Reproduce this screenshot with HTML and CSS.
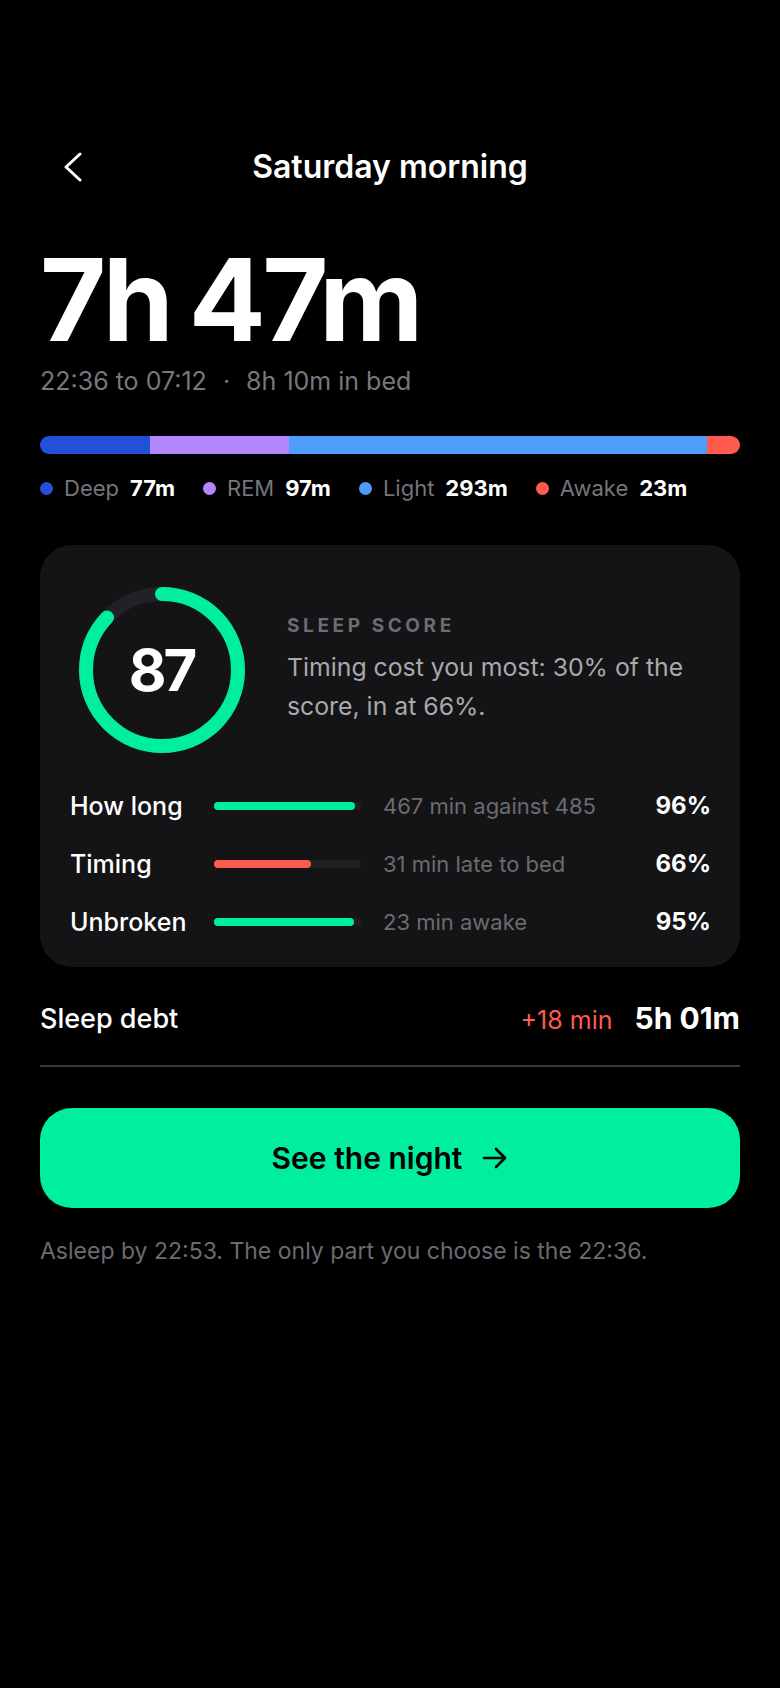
FILE: index.html
```html
<!DOCTYPE html>
<html lang="en">
<head>
  <meta charset="UTF-8">
  <title>Saturday morning</title>
  <link rel="stylesheet" href="styles.css">
</head>
<body>

  <div class="screen">

    <header class="top-bar">
      <button class="back" aria-label="Back">
        <svg width="18" height="30" viewBox="0 0 18 30">
          <path d="M16 2 L2 15 L16 28" fill="none" stroke="#fff" stroke-width="3" stroke-linecap="round" stroke-linejoin="round"/>
        </svg>
      </button>
      <h1>Saturday morning</h1>
      <span></span>
    </header>

    <div class="total">7h 47m</div>
    <div class="span-line">22:36 to 07:12 <span class="sep">·</span> 8h 10m in bed</div>

    <div class="stages">
      <div class="stage deep" style="flex: 77"></div>
      <div class="stage rem" style="flex: 97"></div>
      <div class="stage light" style="flex: 293"></div>
      <div class="stage awake" style="flex: 23"></div>
    </div>

    <div class="legend">
      <div class="legend-item"><i class="dot deep"></i><span class="name">Deep</span><b>77m</b></div>
      <div class="legend-item"><i class="dot rem"></i><span class="name">REM</span><b>97m</b></div>
      <div class="legend-item"><i class="dot light"></i><span class="name">Light</span><b>293m</b></div>
      <div class="legend-item"><i class="dot awake"></i><span class="name">Awake</span><b>23m</b></div>
    </div>

    <section class="card">
      <div class="score-head">
        <div class="ring">
          <svg width="166" height="166" viewBox="0 0 166 166">
            <circle cx="83" cy="83" r="76" fill="none" stroke="#222226" stroke-width="14"/>
            <circle cx="83" cy="83" r="76" fill="none" stroke="#00eea0" stroke-width="14"
              stroke-linecap="round" stroke-dasharray="415.4 477.5" transform="rotate(-90 83 83)"/>
          </svg>
          <div class="ring-value">87</div>
        </div>
        <div class="score-text">
          <div class="score-label">SLEEP SCORE</div>
          <p>Timing cost you most: 30% of the score, in at 66%.</p>
        </div>
      </div>

      <div class="factors">
        <div class="factor">
          <span class="f-name">How long</span>
          <div class="track"><div class="fill good" style="width: 96%"></div></div>
          <span class="f-detail">467 min against 485</span>
          <span class="f-pct">96%</span>
        </div>
        <div class="factor">
          <span class="f-name">Timing</span>
          <div class="track"><div class="fill bad" style="width: 66%"></div></div>
          <span class="f-detail">31 min late to bed</span>
          <span class="f-pct">66%</span>
        </div>
        <div class="factor">
          <span class="f-name">Unbroken</span>
          <div class="track"><div class="fill good" style="width: 95%"></div></div>
          <span class="f-detail">23 min awake</span>
          <span class="f-pct">95%</span>
        </div>
      </div>
    </section>

    <div class="debt">
      <span class="debt-name">Sleep debt</span>
      <div class="debt-values">
        <span class="debt-change">+18 min</span>
        <span class="debt-total">5h 01m</span>
      </div>
    </div>

    <button class="cta">
      See the night
      <svg width="26" height="22" viewBox="0 0 26 22">
        <path d="M2 11 H23 M14 2 L23 11 L14 20" fill="none" stroke="#000" stroke-width="2.6" stroke-linecap="round" stroke-linejoin="round"/>
      </svg>
    </button>

    <p class="note">Asleep by 22:53. The only part you choose is the 22:36.</p>

  </div>

</body>
</html>
```

FILE: styles.css
```css
body {
  margin: 0;
  background: #000;
  color: #fff;
  font-family: Inter, "Noto Sans", sans-serif;
}
.screen {
  width: 780px;
  min-height: 1688px;
  box-sizing: border-box;
  padding: 143px 40px 0;
}
.top-bar {
  display: grid;
  grid-template-columns: 1fr auto 1fr;
  align-items: center;
  height: 48px;
}
.top-bar h1 {
  margin: 0;
  font-size: 32px;
  font-weight: 600;
  line-height: 48px;
}
.back {
  background: none;
  border: none;
  padding: 0 0 0 24px;
  width: 60px;
  height: 48px;
  display: flex;
  align-items: center;
  cursor: pointer;
}
.total {
  margin-top: 52px;
  font-size: 114px;
  font-weight: 700;
  line-height: 114px;
  letter-spacing: -3.5px;
  word-spacing: -5px;
}
.span-line {
  margin-top: 8px;
  font-size: 25px;
  line-height: 32px;
  color: #77777c;
}
.sep {
  margin: 0 9px;
}
.stages {
  display: flex;
  height: 18px;
  margin-top: 39px;
  border-radius: 9px;
  overflow: hidden;
}
.deep { background: #2250d8; }
.rem { background: #b287fd; }
.light { background: #4d9dfd; }
.awake { background: #ff5b4d; }
.legend {
  display: flex;
  gap: 28px;
  margin-top: 20px;
  font-size: 22px;
  line-height: 28px;
}
.legend-item {
  display: flex;
  align-items: center;
}
.dot {
  width: 13px;
  height: 13px;
  border-radius: 50%;
  margin-right: 11px;
}
.name {
  color: #75757a;
  margin-right: 11px;
}
.legend b {
  font-weight: 700;
}
.card {
  margin-top: 43px;
  background: #141416;
  border-radius: 32px;
  padding: 42px 29px 29px 30px;
}
.score-head {
  display: flex;
  align-items: center;
}
.ring {
  position: relative;
  width: 166px;
  height: 166px;
  margin-left: 9px;
  flex-shrink: 0;
}
.ring svg {
  display: block;
}
.ring-value {
  position: absolute;
  inset: 0;
  display: flex;
  align-items: center;
  justify-content: center;
  font-size: 58px;
  font-weight: 700;
  letter-spacing: -3px;
  padding-right: 1px;
}
.score-text {
  margin-left: 42px;
}
.score-label {
  font-size: 19px;
  font-weight: 700;
  line-height: 24px;
  letter-spacing: 3.6px;
  color: #6c6c72;
}
.score-text p {
  margin: 10px 0 0;
  font-size: 24.8px;
  line-height: 39px;
  color: #a8a8ad;
}
.factors {
  margin-top: 37px;
  display: flex;
  flex-direction: column;
  gap: 26px;
}
.factor {
  display: grid;
  grid-template-columns: 122px 147px 1fr auto;
  column-gap: 22px;
  align-items: center;
  line-height: 32px;
}
.f-name {
  font-size: 25px;
  font-weight: 500;
}
.track {
  height: 8px;
  border-radius: 4px;
  background: #1f1f22;
}
.fill {
  height: 100%;
  border-radius: 4px;
}
.fill.good { background: #00eea0; }
.fill.bad { background: #ff5b4d; }
.f-detail {
  font-size: 22px;
  color: #6b6b70;
}
.f-pct {
  font-size: 24px;
  font-weight: 700;
}
.debt {
  display: flex;
  justify-content: space-between;
  align-items: center;
  margin-top: 31px;
  padding-bottom: 25px;
  border-bottom: 2px solid #38383b;
  line-height: 40px;
}
.debt-name {
  font-size: 27px;
  font-weight: 500;
}
.debt-values {
  display: flex;
  align-items: baseline;
  gap: 22px;
}
.debt-change {
  font-size: 25px;
  color: #ff5b4d;
}
.debt-total {
  font-size: 30px;
  font-weight: 700;
}
.cta {
  margin-top: 41px;
  width: 100%;
  height: 100px;
  border: none;
  border-radius: 32px;
  background: #00eea0;
  color: #000;
  font-family: inherit;
  font-size: 30px;
  font-weight: 600;
  display: flex;
  align-items: center;
  justify-content: center;
  gap: 20px;
  cursor: pointer;
}
.note {
  margin: 27px 0 0;
  font-size: 23px;
  line-height: 32px;
  color: #6b6b70;
}
```
